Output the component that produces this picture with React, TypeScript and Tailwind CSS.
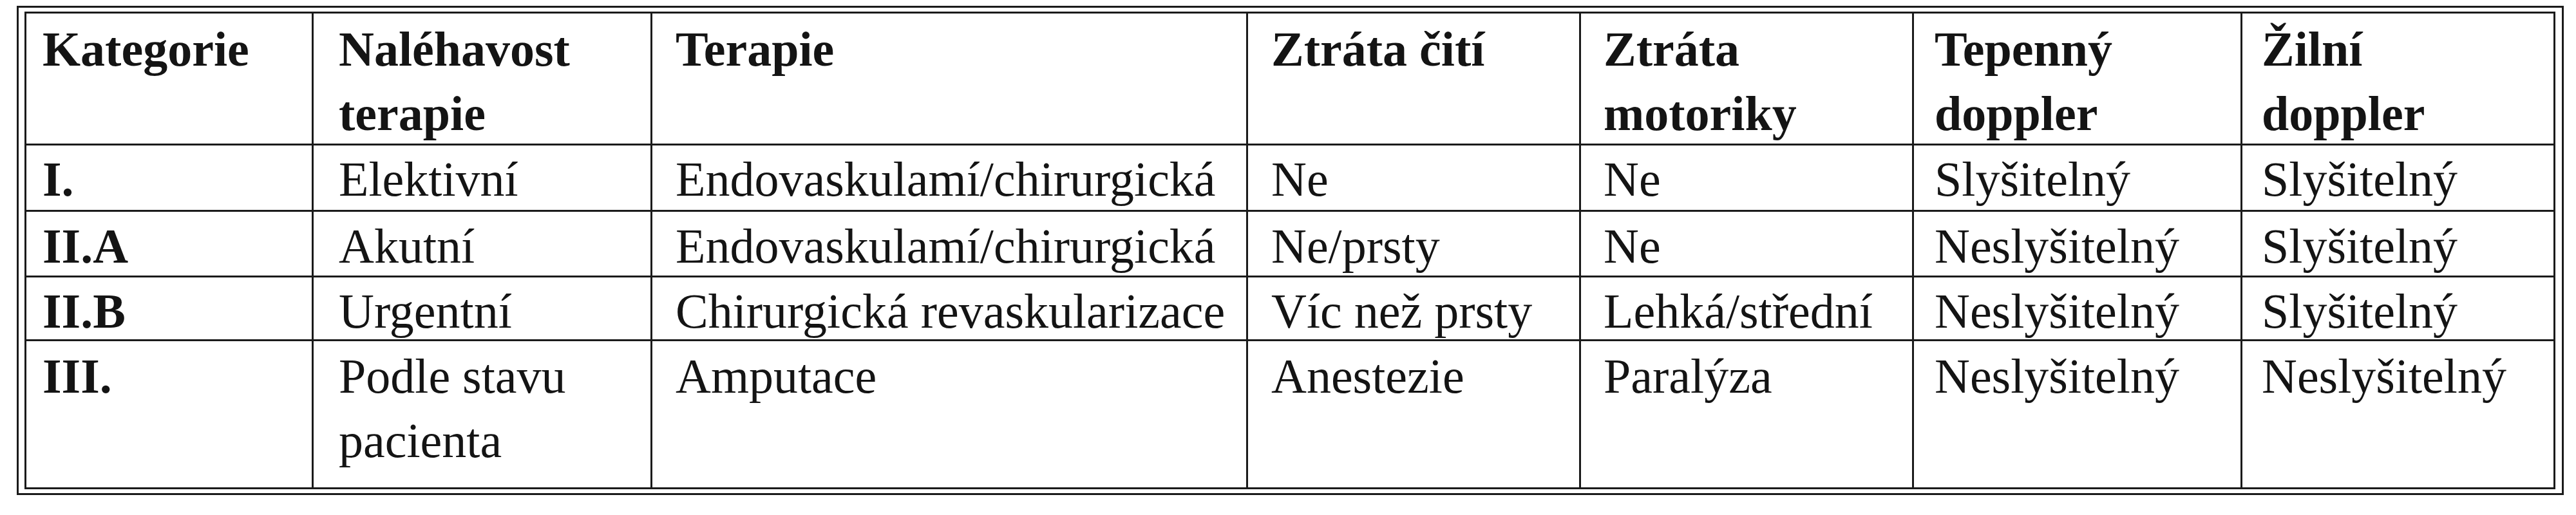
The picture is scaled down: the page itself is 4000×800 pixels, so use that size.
const headers = [
  ['Kategorie'],
  ['Naléhavost', 'terapie'],
  ['Terapie'],
  ['Ztráta čití'],
  ['Ztráta', 'motoriky'],
  ['Tepenný', 'doppler'],
  ['Žilní', 'doppler'],
]

const rows = [
  ['I.', ['Elektivní'], 'Endovaskulamí/chirurgická', 'Ne', 'Ne', 'Slyšitelný', 'Slyšitelný'],
  ['II.A', ['Akutní'], 'Endovaskulamí/chirurgická', 'Ne/prsty', 'Ne', 'Neslyšitelný', 'Slyšitelný'],
  ['II.B', ['Urgentní'], 'Chirurgická revaskularizace', 'Víc než prsty', 'Lehká/střední', 'Neslyšitelný', 'Slyšitelný'],
  ['III.', ['Podle stavu', 'pacienta'], 'Amputace', 'Anestezie', 'Paralýza', 'Neslyšitelný', 'Neslyšitelný'],
] as const

// left padding per column, full class names so tailwind picks them up
const pad = ['pl-[25px]', 'pl-[39px]', 'pl-[36px]', 'pl-[36px]', 'pl-[35px]', 'pl-[32px]', 'pl-[30px]']
const rowPad = ['pt-[2px]', 'pt-[3px]', 'pt-[2px]', 'pt-[4px]']

function Lines({ lines }: { lines: readonly string[] }) {
  return (
    <>
      {lines.map((l, i) => (
        <div key={i} className="whitespace-nowrap">
          {l}
        </div>
      ))}
    </>
  )
}

export default function App() {
  return (
    <div className="min-h-[800px] w-[4000px] bg-white pt-[9px] pl-[26px]">
      <div className="w-fit border-[3px] border-[#1b1b1b] pt-[6px] pr-[10px] pb-[6px] pl-[9px]">
        <div
          className="grid grid-cols-[443px_523px_922px_514px_514px_507px_483px] grid-rows-[202px_100px_99px_96px_227px] gap-[3px] bg-[#1b1b1b] p-[3px] text-[76px] leading-[100px] text-[#141414]"
          style={{ fontFamily: '"Liberation Serif", "Times New Roman", serif' }}
        >
          {headers.map((h, i) => (
            <div key={i} className={`bg-white pt-[5px] font-bold ${pad[i]}`}>
              <Lines lines={h} />
            </div>
          ))}
          {rows.map((r, ri) =>
            r.map((cell, ci) => (
              <div
                key={`${ri}-${ci}`}
                className={`bg-white ${rowPad[ri]} ${pad[ci]} ${ci === 0 ? 'font-bold' : ''}`}
              >
                {typeof cell === 'string' ? (
                  <div className="whitespace-nowrap">{cell}</div>
                ) : (
                  <Lines lines={cell} />
                )}
              </div>
            ))
          )}
        </div>
      </div>
    </div>
  )
}
